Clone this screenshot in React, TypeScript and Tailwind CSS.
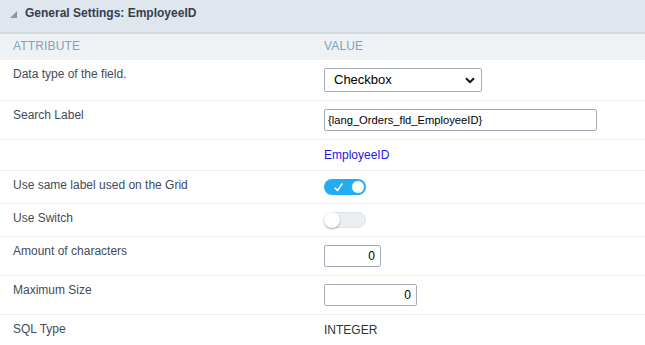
import { ReactNode } from 'react';

const Row = ({ label, children, first }: { label?: string; children?: ReactNode; first?: boolean }) => (
  <div className={`grid grid-cols-[311px_1fr] ${first ? '' : 'border-t border-[#eceff4]'}`}>
    <div className="px-[13px] pt-[7px] pb-[7px] text-[12px] leading-[15px] text-[#434b5b]">{label}</div>
    <div className="px-[13px] py-[8px] text-[12px] leading-[14px]">{children}</div>
  </div>
);

const Toggle = ({ on }: { on: boolean }) =>
  on ? (
    <div className="w-[42px] h-[16px] rounded-full bg-[#22acf2] flex items-center justify-between pl-[10px] pr-[1px]">
      <svg width="9" height="9" viewBox="0 0 9 9">
        <path d="M1 5 L3.5 7.5 L8 1" fill="none" stroke="white" strokeWidth="1.6" strokeLinecap="round" strokeLinejoin="round" />
      </svg>
      <div className="w-[14px] h-[14px] rounded-full bg-white border border-[#22acf2]" />
    </div>
  ) : (
    <div className="w-[42px] h-[16px] rounded-full bg-[#eceff2] border border-[#dde2e7] flex items-center">
      <div className="w-[16px] h-[16px] rounded-full bg-white shadow-[0_1px_2px_rgba(0,0,0,0.35)] -ml-[1px]" />
    </div>
  );

const NumInput = ({ width }: { width: string }) => (
  <div className={`${width} h-[22px] border border-[#a7adb8] rounded-[2px] flex items-center justify-end pr-[5px] text-[12px] text-black`}>
    0
  </div>
);

const App = () => {
  return (
    <div className="w-[645px] h-[345px] overflow-hidden bg-white font-['Liberation_Sans',Arial,sans-serif]">
      {/* panel title */}
      <div className="h-[34px] bg-[#dfe6ee] border-b-2 border-[#d2dae2] flex items-start pt-[6px] pl-[10px] gap-[8px]">
        <svg width="7" height="7" viewBox="0 0 7 7" className="mt-[5px]">
          <polygon points="7,0 7,7 0,7" fill="#8c95a1" />
        </svg>
        <span className="text-[12px] leading-[14px] font-bold text-[#353e50]">General Settings: EmployeeID</span>
      </div>

      {/* column headings */}
      <div className="h-[26px] bg-[#eef2f5] grid grid-cols-[311px_1fr] pt-[5px] text-[12px] leading-[14px] text-[#7fa2b9] tracking-[0.15px]">
        <div className="px-[13px]">ATTRIBUTE</div>
        <div className="px-[13px]">VALUE</div>
      </div>

      <Row label="Data type of the field." first>
        <div className="w-[158px] h-[24px] border border-[#a7adb8] rounded-[2px] flex items-center justify-between pl-[9px] pr-[6px] text-[13px] text-black">
          <span>Checkbox</span>
          <svg width="10" height="7" viewBox="0 0 10 7">
            <path d="M1 1.2 L5 5.2 L9 1.2" fill="none" stroke="#111" strokeWidth="2" />
          </svg>
        </div>
      </Row>
      <Row label="Search Label">
        <div className="w-[273px] h-[22px] border border-[#a7adb8] rounded-[2px] flex items-center pl-[3px] text-[11.2px] text-black">
          {'{lang_Orders_fld_EmployeeID}'}
        </div>
      </Row>
      <Row>
        <span className="text-[#2616ea]">EmployeeID</span>
      </Row>
      <Row label="Use same label used on the Grid">
        <Toggle on />
      </Row>
      <Row label="Use Switch">
        <Toggle on={false} />
      </Row>
      <Row label="Amount of characters">
        <NumInput width="w-[57px]" />
      </Row>
      <Row label="Maximum Size">
        <NumInput width="w-[93px]" />
      </Row>
      <Row label="SQL Type">
        <span className="text-[#333]">INTEGER</span>
      </Row>
    </div>
  );
};

export default App;
